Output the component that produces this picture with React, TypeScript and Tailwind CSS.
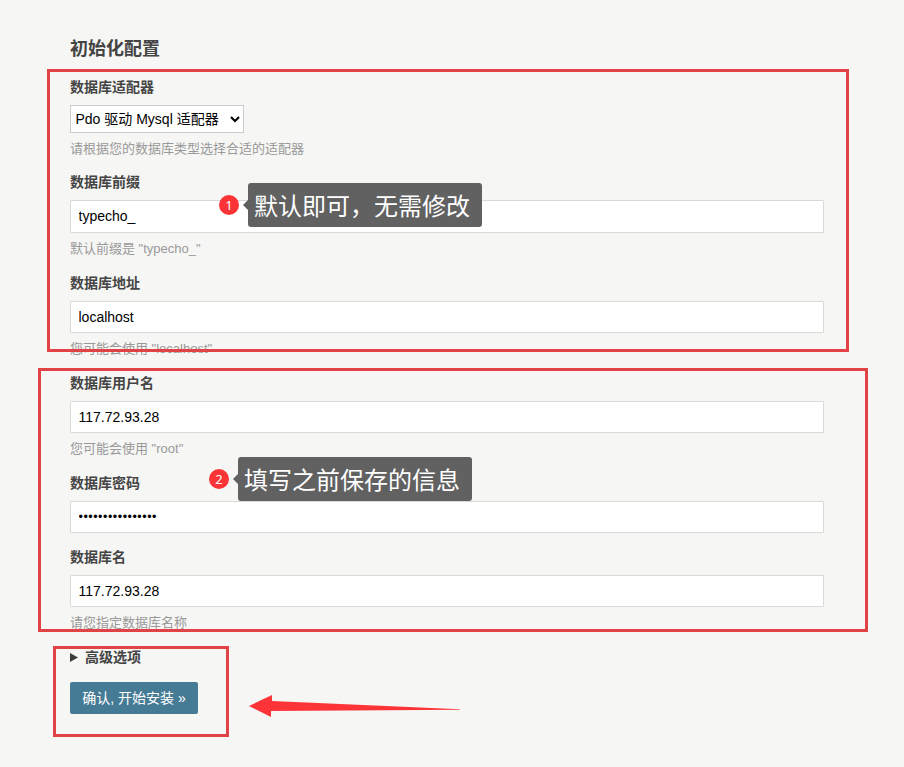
import { useState } from "react";
import type { ReactNode } from "react";
import clsx from "clsx";

type FieldProps = {
  label: string;
  hint?: string;
  className?: string;
  children: ReactNode;
};

function Field({ label, hint, className, children }: FieldProps) {
  return (
    <li className={clsx("flex flex-col items-start", className)}>
      <label className="mb-2 text-[14px] leading-5 font-bold text-[#444]">
        {label}
      </label>
      {children}
      {hint ? (
        <p className="mt-1.5 text-[13px] leading-5 text-[#999]">{hint}</p>
      ) : null}
    </li>
  );
}

type TextInputProps = {
  initialValue: string;
  type?: "text" | "password";
  className?: string;
};

function TextInput({
  initialValue,
  type = "text",
  className = "h-8",
}: TextInputProps) {
  const [value, setValue] = useState(initialValue);

  return (
    <input
      type={type}
      className={clsx(
        "w-full rounded-[1px] border border-[#d9d9d6] bg-white px-[7.5px] text-black outline-none",
        type === "password"
          ? "text-[12.5px] tracking-[0.53px]"
          : "text-[14px]",
        className,
      )}
      value={value}
      onChange={(event) => setValue(event.target.value)}
    />
  );
}

type CalloutProps = {
  step: number;
  text: string;
  className: string;
};

function Callout({ step, text, className }: CalloutProps) {
  return (
    <div className={clsx("absolute flex items-center", className)}>
      <span className="flex size-5 items-center justify-center rounded-full bg-[#fa3436] font-['Noto_Sans','Noto_Sans_CJK_SC',sans-serif] text-[13px] leading-none text-white">
        {step}
      </span>
      <span className="ml-1 h-0 w-0 border-y-[5px] border-r-[5px] border-y-transparent border-r-[#5f5f5f]" />
      <span className="h-11 w-[234px] rounded-[3px] bg-[#595959]/95 pl-1.5 font-['Noto_Sans_CJK_SC',sans-serif] text-[24px] leading-[44px] whitespace-nowrap text-white">
        {text}
      </span>
    </div>
  );
}

function Frame({ className }: { className: string }) {
  return (
    <div
      className={clsx(
        "pointer-events-none absolute border-3 border-[#e04245]",
        className,
      )}
    />
  );
}

export default function App() {
  return (
    <div className="relative h-[767px] w-[904px] overflow-hidden bg-[#f6f6f4] pt-[37px] pl-[70px] font-['Liberation_Sans','Noto_Sans_CJK_SC',sans-serif]">
      <form
        className="w-[754px]"
        onSubmit={(event) => event.preventDefault()}
      >
        <h2 className="mb-4 text-[18px] leading-6 font-bold text-[#444]">
          初始化配置
        </h2>

        <ul>
          <Field
            label="数据库适配器"
            hint="请根据您的数据库类型选择合适的适配器"
            className="mb-[13px]"
          >
            <select className="h-7 w-[174px] border border-[#ccc] bg-white pl-[0.5px] text-[14px] text-black">
              <option>Pdo 驱动 Mysql 适配器</option>
            </select>
          </Field>
          <Field
            label="数据库前缀"
            hint={'默认前缀是 "typecho_"'}
            className="mb-3.5"
          >
            <TextInput initialValue="typecho_" className="h-[33px] pb-px" />
          </Field>
          <Field
            label="数据库地址"
            hint={'您可能会使用 "localhost"'}
            className="mb-3.5"
          >
            <TextInput initialValue="localhost" />
          </Field>
          <Field
            label="数据库用户名"
            hint={'您可能会使用 "root"'}
            className="mb-3.5"
          >
            <TextInput initialValue="117.72.93.28" />
          </Field>
          <Field label="数据库密码" className="mb-3.5">
            <TextInput initialValue="abcdefgh12345678" type="password" />
          </Field>
          <Field label="数据库名" hint="请您指定数据库名称" className="mb-3.5">
            <TextInput initialValue="117.72.93.28" />
          </Field>
        </ul>

        <div className="mb-[15px] flex h-5 items-center text-[14px] font-bold text-[#444]">
          <svg className="mr-[7px] h-[9px] w-2" viewBox="0 0 8 9">
            <path d="M0 0 8 4.5 0 9Z" fill="#3c3c3c" />
          </svg>
          高级选项
        </div>

        <button
          type="submit"
          className="h-8 w-32 rounded-[2px] bg-[#467b96] text-[14px] whitespace-nowrap text-white"
        >
          确认, 开始安装 »
        </button>
      </form>

      <Frame className="top-[69px] left-[47px] h-[283px] w-[802px]" />
      <Frame className="top-[368px] left-[38px] h-[264px] w-[830px]" />
      <Frame className="top-[646px] left-[53px] h-[91px] w-[176px]" />

      <Callout
        step={1}
        text="默认即可，无需修改"
        className="top-[183px] left-[219px]"
      />
      <Callout
        step={2}
        text="填写之前保存的信息"
        className="top-[457px] left-[209px]"
      />

      <svg
        className="absolute top-[694px] left-[249px] h-6 w-[212px]"
        viewBox="0 0 212 24"
      >
        <path
          d="M0 12 23 1V7L211 15.2V15.8L22 17V23Z"
          fill="#fc3438"
        />
      </svg>
    </div>
  );
}
